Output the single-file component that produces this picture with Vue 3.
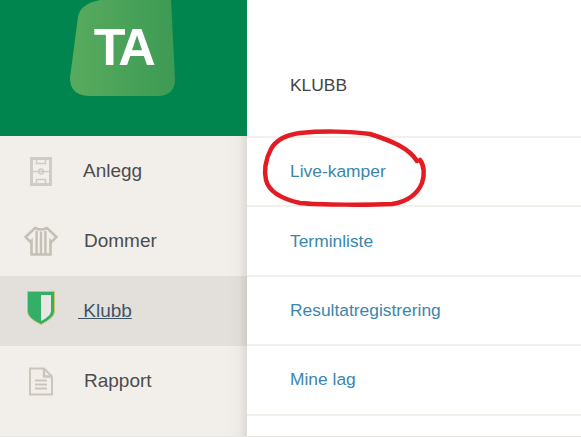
<template>
  <div class="screen">
    <aside class="sidebar">
      <div class="brand">
        <div class="logo">
          <svg class="logo-shape" width="106" height="96" viewBox="0 0 106 96">
            <defs>
              <linearGradient id="logoFill" x1="0" x2="1" y1="0" y2="0">
                <stop offset="0" stop-color="#58ab5e" />
                <stop offset="1" stop-color="#3d9a54" />
              </linearGradient>
            </defs>
            <path d="M30 0H101L105 79Q105 96 87 96H21Q0 96 0 78L8 17Q10 4 30 0Z" fill="url(#logoFill)" />
          </svg>
          <span class="logo-text">TA</span>
        </div>
      </div>
      <nav class="menu">
        <a v-for="item in menu" :key="item.label" class="menu-item" :class="{ active: item.active }">
          <span class="menu-icon">
            <svg v-if="item.icon === 'pitch'" width="22" height="29" viewBox="0 0 22 29" fill="none" stroke="#cdccc8" stroke-width="3">
              <path d="M1.500 1.500h19v26h-19z" />
              <path d="M1.500 14.500h19M6.500 1.500v5h9v-5M6.500 27.500v-5h9v5" stroke-width="1.500" />
              <circle cx="11" cy="14.500" r="2.400" stroke-width="1.500" />
            </svg>
            <svg v-else-if="item.icon === 'shirt'" width="34" height="30" viewBox="0 0 34 30" fill="none" stroke="#c6bfb5" stroke-width="2.600">
              <path d="M11 2 1.500 11l5 5 1-1v13.500h19V15l1 1 5-5L23 2q-6 3-12 0Z" />
              <path d="M12.600 5v23M17 5.500V28M21.400 5v23" stroke-width="2.400" />
            </svg>
            <svg v-else-if="item.icon === 'shield'" class="crest" width="28" height="34" viewBox="0 0 28 34">
              <path d="M.5.500h27v20q0 6-13.500 13Q.5 27 .5 20.500Z" fill="#35ae66" stroke="#c9c06a" stroke-width="1" />
              <path d="M14 4h10v16q0 5-10 10Z" fill="#e9e7e2" />
            </svg>
            <svg v-else width="26" height="29" viewBox="0 0 26 29" fill="none" stroke="#cbc5bb" stroke-width="2">
              <path d="M2 1.500h14l8 8v18H2Z" />
              <path d="M16 1.500v8h8" stroke-width="2.400" />
              <path d="M7 13.500h12M7 17.500h12M7 21.500h12" stroke-width="1.800" />
            </svg>
          </span>
          <span class="menu-label" :class="{ nudge: item.icon === 'pitch' }">{{ item.label }}</span>
        </a>
      </nav>
    </aside>

    <main class="content">
      <h2 class="title">KLUBB</h2>
      <a v-for="link in links" :key="link" class="link-row">{{ link }}</a>
    </main>

    <!-- hand drawn marking on top of the screenshot -->
    <svg class="marking" width="581" height="437" viewBox="0 0 581 437" fill="none">
      <path
        d="M417 161C409 148 392 141 370 134C350 131 320 131 300 133C285 135 276 140 271 149C265 160 264 172 266 180C269 192 282 199 300 203C320 205 370 205 392 204C408 202 418 193 422 183C425 175 424 165 420 160"
        stroke="#e31b23"
        stroke-width="4.500"
        stroke-linecap="round"
      />
    </svg>
  </div>
</template>

<script setup>
const menu = [
  { label: 'Anlegg', icon: 'pitch' },
  { label: 'Dommer', icon: 'shirt' },
  { label: '\u00a0Klubb', icon: 'shield', active: true },
  { label: 'Rapport', icon: 'doc' },
]

const links = ['Live-kamper', 'Terminliste', 'Resultatregistrering', 'Mine lag']
</script>

<style>
body {
  background: #fff;
}
</style>

<style scoped>
.screen {
  position: relative;
  display: flex;
  width: 581px;
  height: 437px;
  box-sizing: border-box;
  border-bottom: 1px solid #e8e6e3;
  overflow: hidden;
  font-family: 'Liberation Sans', Arial, sans-serif;
}

.sidebar {
  position: relative;
  width: 247px;
  flex-shrink: 0;
  background: #f2efeb;
}

.sidebar::after {
  content: '';
  position: absolute;
  top: 136px;
  right: 0;
  bottom: 0;
  width: 20px;
  background: linear-gradient(to right, rgba(0, 0, 0, 0), rgba(0, 0, 0, 0.02) 60%, rgba(0, 0, 0, 0.09));
}

.brand {
  height: 136px;
  background: #00854f;
  padding-left: 70px;
}

.logo {
  position: relative;
  width: 106px;
  height: 96px;
  display: flex;
  justify-content: center;
  padding-top: 21px;
  box-sizing: border-box;
}

.logo-shape {
  position: absolute;
  left: 0;
  top: 0;
}

.logo-text {
  position: relative;
  color: #fff;
  font-size: 52px;
  line-height: 52px;
  font-weight: 700;
  letter-spacing: -3.500px;
}

.menu-item {
  display: flex;
  align-items: center;
  height: 70px;
  color: #4c4c4c;
  font-size: 19px;
}

.menu-item.active {
  background: #e3e0dc;
}

.menu-icon {
  width: 84px;
  display: flex;
  justify-content: center;
  padding-right: 2px;
  box-sizing: border-box;
}

.crest {
  margin-top: -6px;
}

.nudge {
  margin-left: -1px;
}

.active .menu-label {
  color: #3f5566;
  text-decoration: underline;
  margin-left: -6px;
}

.content {
  flex: 1;
  font-size: 17.400px;
}

.title {
  height: 138px;
  margin: 0;
  padding-left: 43px;
  padding-top: 75px;
  box-sizing: border-box;
  font-size: inherit;
  font-weight: 400;
  line-height: 20px;
  color: #444;
  border-bottom: 2px solid #f3f0ec;
}

.link-row {
  display: flex;
  align-items: center;
  height: 69.400px;
  box-sizing: border-box;
  padding-left: 43px;
  color: #3a87ad;
  border-bottom: 2px solid #f3f0ec;
}

.marking {
  position: absolute;
  left: 0;
  top: 0;
  pointer-events: none;
}
</style>
